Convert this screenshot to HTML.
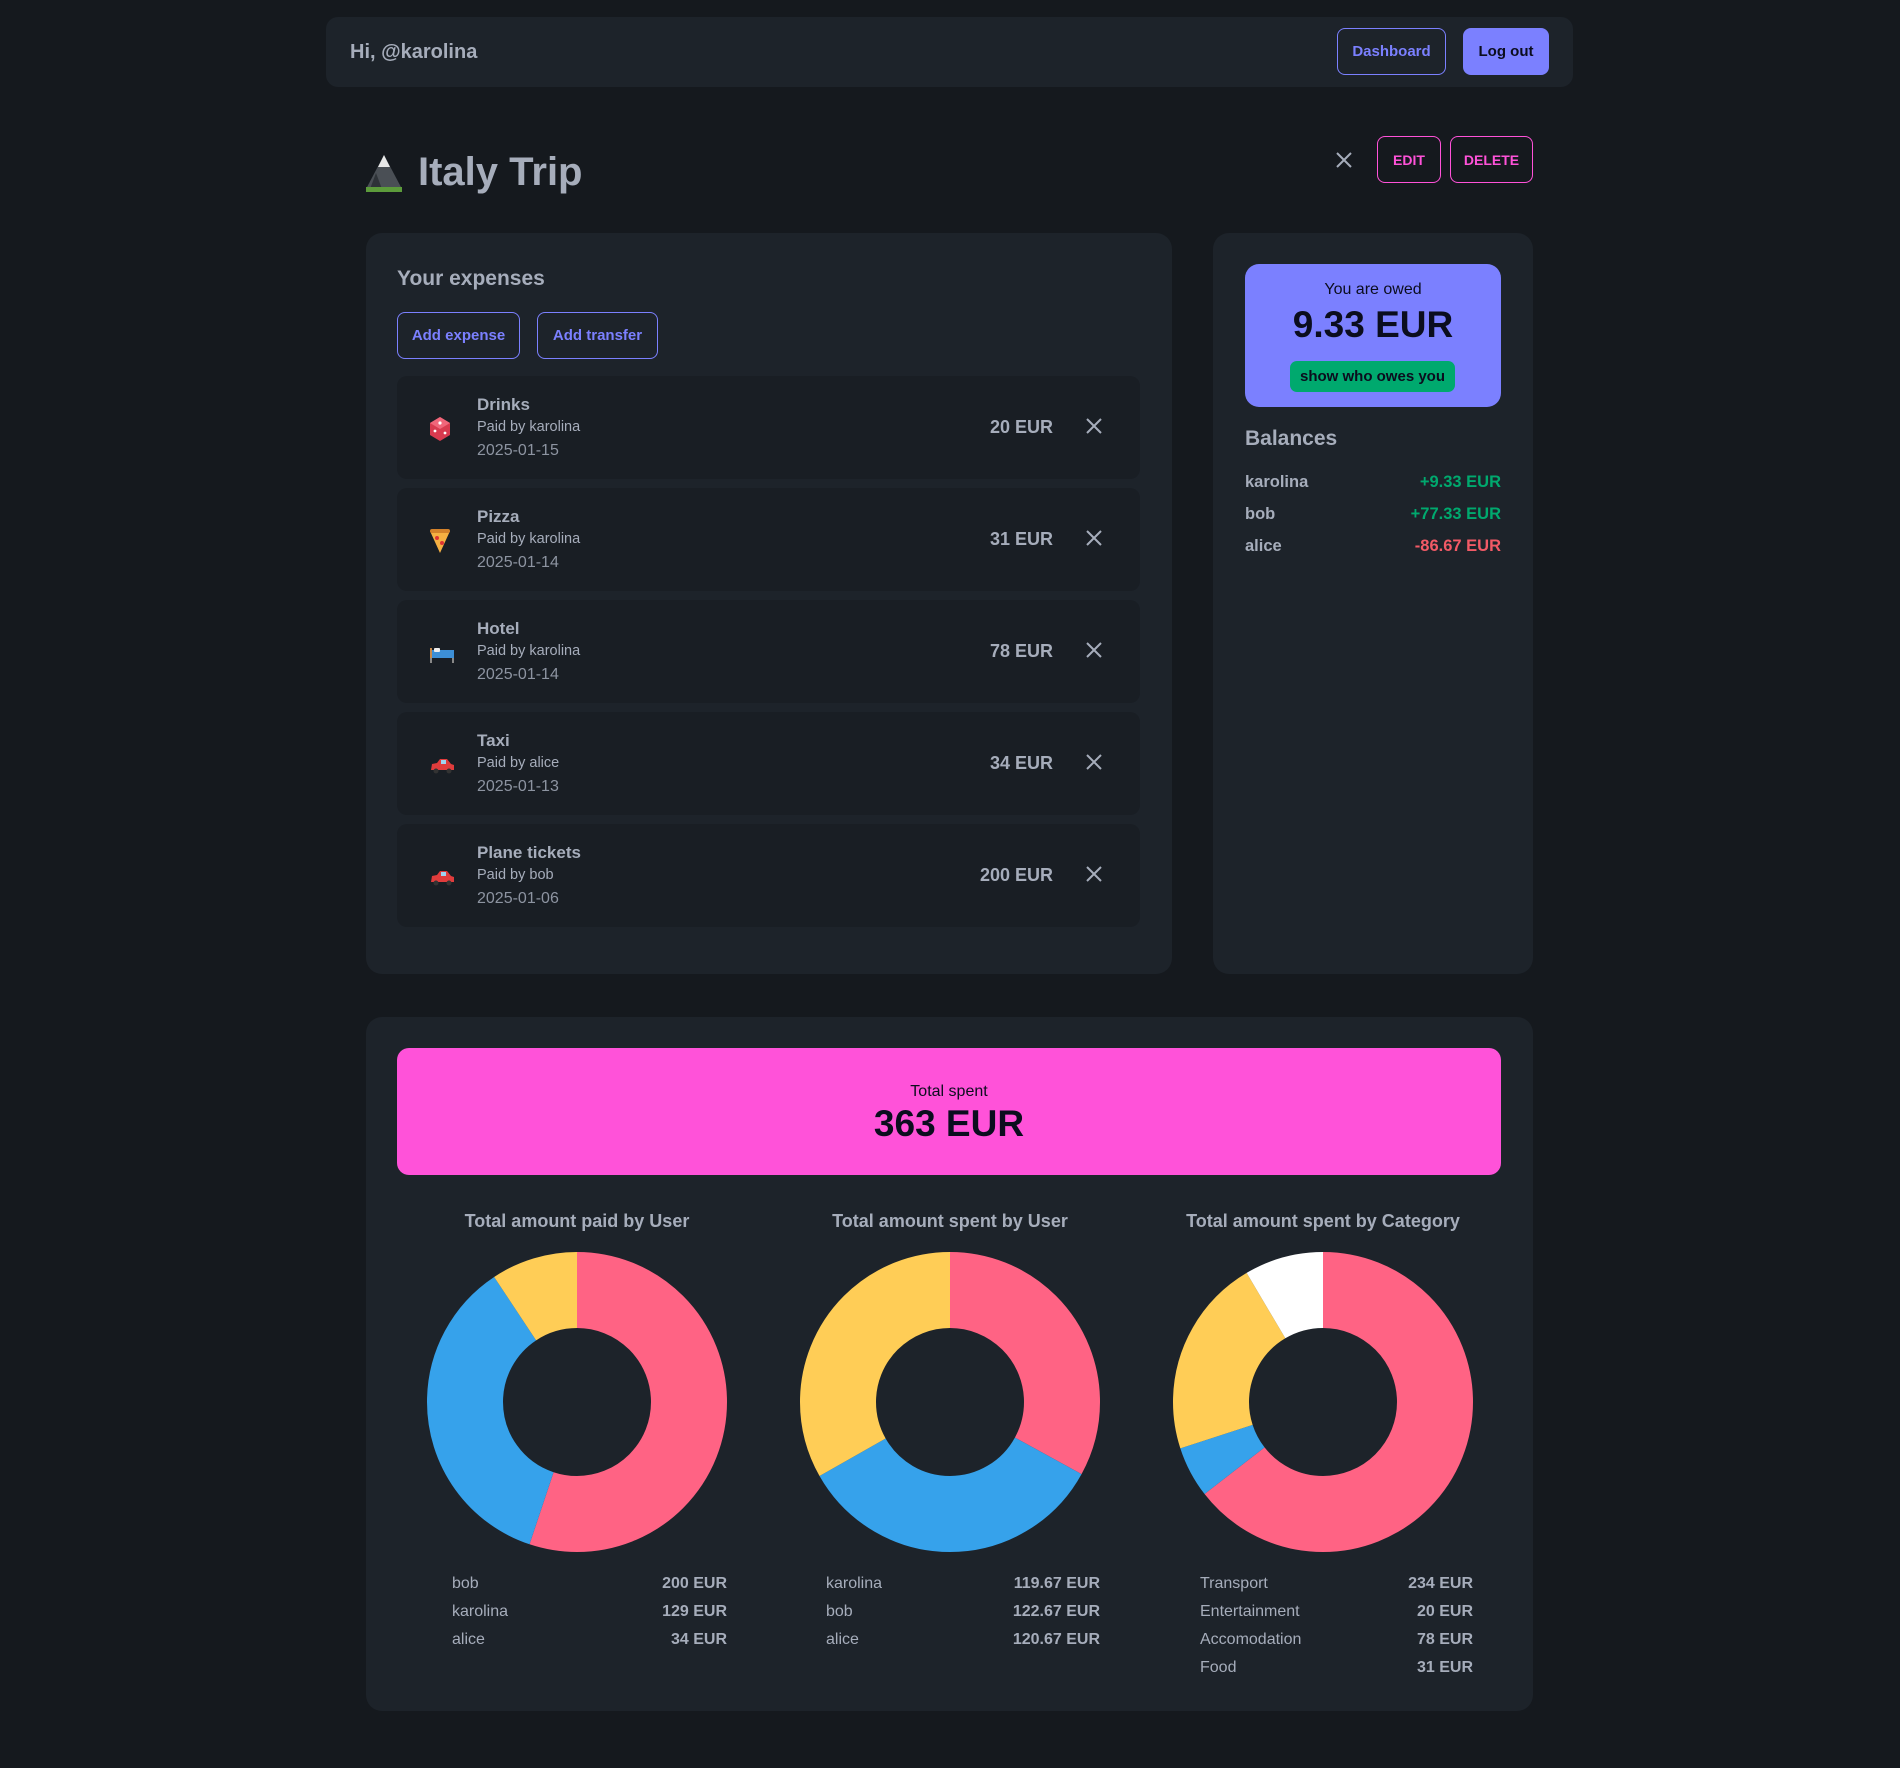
<!DOCTYPE html>
<html><head><meta charset="utf-8"><style>
*{box-sizing:border-box;margin:0;padding:0}
body{width:1900px;height:1768px;background:#15191e;font-family:"Liberation Sans","Noto Sans CJK JP",sans-serif;color:#a6adbb;position:relative;overflow:hidden}
.a{position:absolute}
.t{position:absolute;white-space:nowrap;line-height:1}
.card{position:absolute;background:#1d232a;border-radius:16px}
.btn{position:absolute;border-radius:8px;display:flex;align-items:center;justify-content:center;font-weight:bold;font-size:15px}
.row{position:absolute;left:397px;width:743px;height:103px;background:#191e24;border-radius:10px}
.row .n{position:absolute;left:80px;top:19px;font-size:17px;font-weight:bold;color:#a6adbb}
.row .p{position:absolute;left:80px;top:43px;font-size:14.5px;color:#a6adbb}
.row .d{position:absolute;left:80px;top:66px;font-size:16px;color:#8d94a1}
.row .m{position:absolute;right:87px;top:41px;font-size:18px;font-weight:bold}
.row .x{position:absolute;right:38px;top:42px}
.row .i{position:absolute;left:32px;top:40px}
.lg{position:absolute;font-size:16px;line-height:28px}
.lg div{display:flex;justify-content:space-between}
.lg b{font-weight:bold}
</style></head><body>

<div class="card" style="left:326px;top:17px;width:1247px;height:70px;border-radius:12px"></div>
<div class="t" style="left:350px;top:42px;font-size:20px;font-weight:bold">Hi, @karolina</div>
<div class="btn" style="left:1337px;top:28px;width:109px;height:47px;border:1px solid #7b80ff;color:#7b80ff">Dashboard</div>
<div class="btn" style="left:1463px;top:28px;width:86px;height:47px;background:#7b80ff;color:#0b0d1e">Log out</div>

<svg class="a" style="left:364px;top:153px" width="40" height="40" viewBox="0 0 40 40"><polygon points="20,2 38,36 2,36" fill="#4a4f55"/><polygon points="20,2 26,14 14,14" fill="#e8e8e8"/><polygon points="12,20 18,36 6,36" fill="#2e3338"/><rect x="2" y="34" width="36" height="5" fill="#5c9b3b"/></svg>
<div class="t" style="left:418px;top:152px;font-size:40px;font-weight:bold;color:#a6adbb">Italy Trip</div>

<svg class="a" style="left:1336px;top:152px" width="16" height="16" viewBox="0 0 16 16"><path d="M1 1L15 15M15 1L1 15" stroke="#a6adbb" stroke-width="2"/></svg>
<div class="btn" style="left:1377px;top:136px;width:64px;height:47px;border:1px solid #ff52d9;color:#ff52d9;font-size:14px">EDIT</div>
<div class="btn" style="left:1450px;top:136px;width:83px;height:47px;border:1px solid #ff52d9;color:#ff52d9;font-size:14px">DELETE</div>

<div class="card" style="left:366px;top:233px;width:806px;height:741px"></div>
<div class="t" style="left:397px;top:268px;font-size:21px;font-weight:bold">Your expenses</div>
<div class="btn" style="left:397px;top:312px;width:123px;height:47px;border:1px solid #7b80ff;color:#7b80ff">Add expense</div>
<div class="btn" style="left:537px;top:312px;width:121px;height:47px;border:1px solid #7b80ff;color:#7b80ff">Add transfer</div>

<div class="row" style="top:376px"><svg class="i" width="22" height="26" viewBox="0 0 22 26"><polygon points="11,1 21,7 21,19 11,25 1,19 1,7" fill="#d83a4f"/><polygon points="11,1 21,7 11,13 1,7" fill="#f0667a"/><circle cx="11" cy="7" r="1.6" fill="#fff"/><circle cx="6" cy="15" r="1.4" fill="#fff"/><circle cx="16" cy="17" r="1.4" fill="#fff"/></svg><div class="n">Drinks</div><div class="p">Paid by karolina</div><div class="d">2025-01-15</div><div class="m">20 EUR</div><svg class="x" width="16" height="16" viewBox="0 0 16 16"><path d="M1 1L15 15M15 1L1 15" stroke="#a6adbb" stroke-width="2"/></svg></div>
<div class="row" style="top:488px"><svg class="i" width="22" height="26" viewBox="0 0 22 26"><polygon points="1,3 21,3 11,25" fill="#f5b042"/><rect x="1" y="1" width="20" height="4" rx="2" fill="#d4822a"/><circle cx="8" cy="10" r="2" fill="#d33"/><circle cx="13" cy="15" r="2" fill="#d33"/></svg><div class="n">Pizza</div><div class="p">Paid by karolina</div><div class="d">2025-01-14</div><div class="m">31 EUR</div><svg class="x" width="16" height="16" viewBox="0 0 16 16"><path d="M1 1L15 15M15 1L1 15" stroke="#a6adbb" stroke-width="2"/></svg></div>
<div class="row" style="top:600px"><svg class="i" width="26" height="26" viewBox="0 0 26 26"><rect x="1" y="10" width="24" height="8" fill="#3d8fd6"/><rect x="5" y="8" width="6" height="4" rx="1" fill="#eee"/><rect x="1" y="18" width="2" height="5" fill="#888"/><rect x="23" y="18" width="2" height="5" fill="#888"/><rect x="1" y="8" width="2" height="10" fill="#c88a4a"/></svg><div class="n">Hotel</div><div class="p">Paid by karolina</div><div class="d">2025-01-14</div><div class="m">78 EUR</div><svg class="x" width="16" height="16" viewBox="0 0 16 16"><path d="M1 1L15 15M15 1L1 15" stroke="#a6adbb" stroke-width="2"/></svg></div>
<div class="row" style="top:712px"><svg class="i" width="26" height="26" viewBox="0 0 26 26"><path d="M2 18 L3 12 L8 11 L11 7 L18 7 L22 12 L25 13 L25 18Z" fill="#e03c3c"/><rect x="12" y="8" width="5" height="4" fill="#9fd3f0"/><circle cx="7" cy="19" r="2.5" fill="#333"/><circle cx="20" cy="19" r="2.5" fill="#333"/></svg><div class="n">Taxi</div><div class="p">Paid by alice</div><div class="d">2025-01-13</div><div class="m">34 EUR</div><svg class="x" width="16" height="16" viewBox="0 0 16 16"><path d="M1 1L15 15M15 1L1 15" stroke="#a6adbb" stroke-width="2"/></svg></div>
<div class="row" style="top:824px"><svg class="i" width="26" height="26" viewBox="0 0 26 26"><path d="M2 18 L3 12 L8 11 L11 7 L18 7 L22 12 L25 13 L25 18Z" fill="#e03c3c"/><rect x="12" y="8" width="5" height="4" fill="#9fd3f0"/><circle cx="7" cy="19" r="2.5" fill="#333"/><circle cx="20" cy="19" r="2.5" fill="#333"/></svg><div class="n">Plane tickets</div><div class="p">Paid by bob</div><div class="d">2025-01-06</div><div class="m">200 EUR</div><svg class="x" width="16" height="16" viewBox="0 0 16 16"><path d="M1 1L15 15M15 1L1 15" stroke="#a6adbb" stroke-width="2"/></svg></div>

<div class="card" style="left:1213px;top:233px;width:320px;height:741px"></div>
<div class="a" style="left:1245px;top:264px;width:256px;height:143px;background:#7b80ff;border-radius:14px;color:#0b0d1e;text-align:center">
 <div style="position:absolute;left:0;right:0;top:18px;font-size:16px;line-height:1">You are owed</div>
 <div style="position:absolute;left:0;right:0;top:42px;font-size:37px;font-weight:bold;line-height:1">9.33 EUR</div>
 <div style="position:absolute;left:45px;width:165px;top:97px;height:31px;background:#00a96e;border-radius:7px;font-size:15px;font-weight:bold;line-height:31px">show who owes you</div>
</div>
<div class="t" style="left:1245px;top:428px;font-size:21px;font-weight:bold">Balances</div>
<div class="lg" style="left:1245px;width:256px;top:466px;line-height:32px;font-weight:bold;font-size:16.5px">
 <div><span>karolina</span><span style="color:#00a96e">+9.33 EUR</span></div>
 <div><span>bob</span><span style="color:#00a96e">+77.33 EUR</span></div>
 <div><span>alice</span><span style="color:#f25a66">-86.67 EUR</span></div>
</div>

<div class="card" style="left:366px;top:1017px;width:1167px;height:694px"></div>
<div class="a" style="left:397px;top:1048px;width:1104px;height:127px;background:#ff52d9;border-radius:12px;color:#0b0d1e;text-align:center">
 <div style="position:absolute;left:0;right:0;top:36px;font-size:16px;line-height:1">Total spent</div>
 <div style="position:absolute;left:0;right:0;top:57px;font-size:37px;font-weight:bold;line-height:1">363 EUR</div>
</div>

<div class="t" style="left:427px;width:300px;text-align:center;top:1212px;font-size:18px;font-weight:bold">Total amount paid by User</div>
<div class="t" style="left:800px;width:300px;text-align:center;top:1212px;font-size:18px;font-weight:bold">Total amount spent by User</div>
<div class="t" style="left:1148px;width:350px;text-align:center;top:1212px;font-size:18px;font-weight:bold">Total amount spent by Category</div>

<svg class="a" style="left:427px;top:1252px" width="300" height="300" viewBox="0 0 300 300"><g transform="rotate(-90 150 150)" fill="none" stroke-width="76">
<circle cx="150" cy="150" r="112" stroke="#ff6384" stroke-dasharray="387.8 703.7"/>
<circle cx="150" cy="150" r="112" stroke="#36a2eb" stroke-dasharray="250.1 703.7" stroke-dashoffset="-387.8"/>
<circle cx="150" cy="150" r="112" stroke="#ffcd56" stroke-dasharray="65.8 703.7" stroke-dashoffset="-637.9"/></g></svg>
<svg class="a" style="left:800px;top:1252px" width="300" height="300" viewBox="0 0 300 300"><g transform="rotate(-90 150 150)" fill="none" stroke-width="76">
<circle cx="150" cy="150" r="112" stroke="#ff6384" stroke-dasharray="232 703.7"/>
<circle cx="150" cy="150" r="112" stroke="#36a2eb" stroke-dasharray="237.8 703.7" stroke-dashoffset="-232"/>
<circle cx="150" cy="150" r="112" stroke="#ffcd56" stroke-dasharray="233.9 703.7" stroke-dashoffset="-469.8"/></g></svg>
<svg class="a" style="left:1173px;top:1252px" width="300" height="300" viewBox="0 0 300 300"><g transform="rotate(-90 150 150)" fill="none" stroke-width="76">
<circle cx="150" cy="150" r="112" stroke="#ff6384" stroke-dasharray="453.6 703.7"/>
<circle cx="150" cy="150" r="112" stroke="#36a2eb" stroke-dasharray="38.8 703.7" stroke-dashoffset="-453.6"/>
<circle cx="150" cy="150" r="112" stroke="#ffcd56" stroke-dasharray="151.2 703.7" stroke-dashoffset="-492.4"/>
<circle cx="150" cy="150" r="112" stroke="#ffffff" stroke-dasharray="60.1 703.7" stroke-dashoffset="-643.6"/></g></svg>

<div class="lg" style="left:452px;width:275px;top:1570px">
 <div><span>bob</span><b>200 EUR</b></div><div><span>karolina</span><b>129 EUR</b></div><div><span>alice</span><b>34 EUR</b></div></div>
<div class="lg" style="left:826px;width:274px;top:1570px">
 <div><span>karolina</span><b>119.67 EUR</b></div><div><span>bob</span><b>122.67 EUR</b></div><div><span>alice</span><b>120.67 EUR</b></div></div>
<div class="lg" style="left:1200px;width:273px;top:1570px">
 <div><span>Transport</span><b>234 EUR</b></div><div><span>Entertainment</span><b>20 EUR</b></div><div><span>Accomodation</span><b>78 EUR</b></div><div><span>Food</span><b>31 EUR</b></div></div>

</body></html>
